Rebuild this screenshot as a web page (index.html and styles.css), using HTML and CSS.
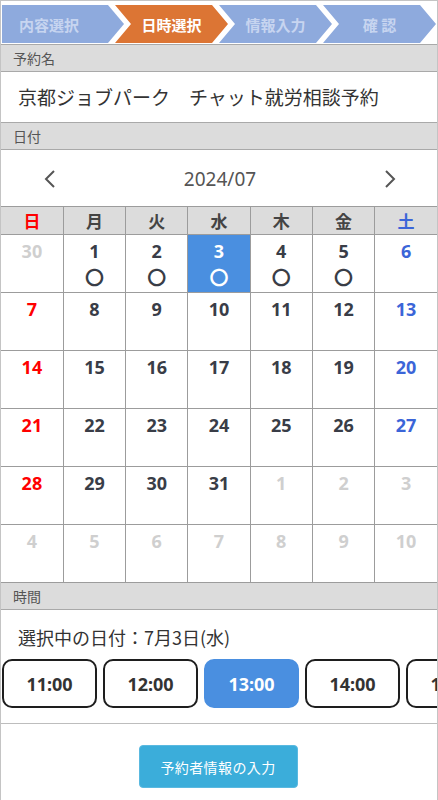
FILE: index.html
```html
<!DOCTYPE html>
<html lang="ja">
<head>
<meta charset="utf-8">
<title>日時選択</title>
<link rel="stylesheet" href="styles.css">
</head>
<body>
<div class="page">
  <div class="steps">
    <div class="step step-first">内容選択</div>
    <div class="step step-active">日時選択</div>
    <div class="step">情報入力</div>
    <div class="step">確 認</div>
  </div>

  <div class="sec-head">予約名</div>
  <div class="name">京都ジョブパーク　チャット就労相談予約</div>

  <div class="sec-head">日付</div>
  <div class="cal-nav">
    <span class="nav-arrow"><svg width="14" height="20" viewBox="0 0 14 20"><polyline points="11,2 3,10 11,18" fill="none" stroke="#555" stroke-width="2"/></svg></span>
    <span class="month">2024/07</span>
    <span class="nav-arrow"><svg width="14" height="20" viewBox="0 0 14 20"><polyline points="3,2 11,10 3,18" fill="none" stroke="#555" stroke-width="2"/></svg></span>
  </div>
  <table class="cal">
    <thead>
      <tr><th class="sun">日</th><th>月</th><th>火</th><th>水</th><th>木</th><th>金</th><th class="sat">土</th></tr>
    </thead>
    <tbody>
      <tr>
        <td class="other"><div class="d">30</div></td>
        <td><div class="d">1</div><div class="ok">〇</div></td>
        <td><div class="d">2</div><div class="ok">〇</div></td>
        <td class="selected"><div class="d">3</div><div class="ok">〇</div></td>
        <td><div class="d">4</div><div class="ok">〇</div></td>
        <td><div class="d">5</div><div class="ok">〇</div></td>
        <td class="sat"><div class="d">6</div></td>
      </tr>
      <tr>
        <td class="sun"><div class="d">7</div></td>
        <td><div class="d">8</div></td><td><div class="d">9</div></td><td><div class="d">10</div></td>
        <td><div class="d">11</div></td><td><div class="d">12</div></td>
        <td class="sat"><div class="d">13</div></td>
      </tr>
      <tr>
        <td class="sun"><div class="d">14</div></td>
        <td><div class="d">15</div></td><td><div class="d">16</div></td><td><div class="d">17</div></td>
        <td><div class="d">18</div></td><td><div class="d">19</div></td>
        <td class="sat"><div class="d">20</div></td>
      </tr>
      <tr>
        <td class="sun"><div class="d">21</div></td>
        <td><div class="d">22</div></td><td><div class="d">23</div></td><td><div class="d">24</div></td>
        <td><div class="d">25</div></td><td><div class="d">26</div></td>
        <td class="sat"><div class="d">27</div></td>
      </tr>
      <tr>
        <td class="sun"><div class="d">28</div></td>
        <td><div class="d">29</div></td><td><div class="d">30</div></td><td><div class="d">31</div></td>
        <td class="other"><div class="d">1</div></td><td class="other"><div class="d">2</div></td>
        <td class="other"><div class="d">3</div></td>
      </tr>
      <tr>
        <td class="other"><div class="d">4</div></td><td class="other"><div class="d">5</div></td>
        <td class="other"><div class="d">6</div></td><td class="other"><div class="d">7</div></td>
        <td class="other"><div class="d">8</div></td><td class="other"><div class="d">9</div></td>
        <td class="other"><div class="d">10</div></td>
      </tr>
    </tbody>
  </table>

  <div class="sec-head sec-head-after-cal">時間</div>
  <div class="time-sec">
    <div class="sel-date">選択中の日付：7月3日(水)</div>
    <div class="times">
      <button class="time">11:00</button>
      <button class="time">12:00</button>
      <button class="time time-selected">13:00</button>
      <button class="time">14:00</button>
      <button class="time">15:00</button>
    </div>
  </div>
  <div class="actions">
    <button class="next">予約者情報の入力</button>
  </div>
</div>
</body>
</html>
```

FILE: styles.css
```css
* { box-sizing: border-box; }
html, body { margin: 0; padding: 0; background: #fff; }
body {
  font-family: "Noto Sans", "Noto Sans CJK JP", sans-serif;
  color: #333;
}
.page {
  width: 438px;
  border: 1px solid #c4c4c4;
  border-bottom: none;
  min-height: 800px;
}

/* steps */
.steps {
  display: flex;
  padding: 4px 0 1px 1px;
  overflow: hidden;
}
.step {
  flex: 0 0 113px;
  height: 38px;
  margin-left: -9px;
  background: #8eaadd;
  color: #c7d5f0;
  font-family: "Noto Sans CJK JP", sans-serif;
  font-weight: 700;
  font-size: 15px;
  display: flex;
  align-items: center;
  justify-content: center;
  clip-path: polygon(0 0, calc(100% - 16px) 0, 100% 50%, calc(100% - 16px) 100%, 0 100%, 16px 50%);
}
.step-first {
  flex-basis: 122px;
  margin-left: 0;
  padding-right: 28px;
  clip-path: polygon(0 0, calc(100% - 16px) 0, 100% 50%, calc(100% - 16px) 100%, 0 100%);
}
.step-active {
  background: #dc7534;
  color: #fff;
}

/* section headers */
.sec-head {
  height: 28px;
  background: #dcdcdc;
  border-top: 1px solid #a9a9a9;
  border-bottom: 1px solid #a9a9a9;
  padding-left: 12px;
  font-size: 14px;
  line-height: 26px;
  color: #555;
  font-family: "Noto Sans CJK JP", sans-serif;
}
.sec-head-after-cal { border-top: none; height: 27px; }

.name {
  height: 50px;
  padding-left: 17px;
  font-size: 19px;
  line-height: 50px;
  color: #333;
  font-family: "Noto Sans CJK JP", sans-serif;
}

/* calendar nav */
.cal-nav {
  height: 56px;
  display: flex;
  align-items: center;
  justify-content: space-between;
  padding: 2px 40px 0 42px;
}
.nav-arrow { display: flex; }
.month {
  font-size: 19px;
  color: #555;
}

/* calendar */
.cal {
  width: 100%;
  border-collapse: collapse;
  table-layout: fixed;
}
.cal th, .cal td {
  border: 1px solid #9c9c9c;
  text-align: center;
  padding: 0;
}
.cal tr > :first-child { border-left: none; }
.cal tr > :last-child { border-right: none; }
.cal th {
  height: 28px;
  background: #dcdcdc;
  font-family: "Noto Sans CJK JP", sans-serif;
  font-weight: 700;
  font-size: 17px;
  color: #444;
}
.cal td {
  height: 58px;
  vertical-align: top;
  color: #393d47;
}
.cal .d {
  font-weight: 700;
  font-size: 18px;
  line-height: 22px;
  padding-top: 5px;
}
.cal .ok {
  font-family: "Noto Sans CJK JP", sans-serif;
  font-size: 19px;
  font-weight: 700;
  line-height: 22px;
  margin-top: 4px;
}
.cal .sun { color: #ff0000; }
.cal .sat { color: #3b65d8; }
.cal .other { color: #cfcfcf; }
.cal .selected { background: #4a8fe0; color: #fff; }

/* time */
.time-sec {
  padding: 15px 0 15px 1px;
  border-bottom: 1px solid #bdbdbd;
}
.sel-date {
  padding-left: 16px;
  font-size: 18px;
  line-height: 24px;
  color: #333;
  font-family: "Noto Sans CJK JP", sans-serif;
}
.times {
  margin-top: 10px;
  display: flex;
  gap: 6px;
  overflow: hidden;
}
.time {
  flex: 0 0 95px;
  height: 49px;
  border: 2px solid #1e1e1e;
  border-radius: 10px;
  background: #fff;
  font-family: "Noto Sans", sans-serif;
  font-weight: 700;
  font-size: 18px;
  color: #333;
  padding: 0;
}
.time-selected {
  background: #4a8fe0;
  border-color: #4a8fe0;
  color: #fff;
}

.actions {
  display: flex;
  justify-content: center;
  padding-top: 21px;
  padding-right: 2px;
}
.next {
  width: 159px;
  height: 43px;
  background: #3badda;
  border: 1px solid #5ab9e0;
  border-radius: 4px;
  color: #fff;
  font-family: "Noto Sans CJK JP", sans-serif;
  font-size: 14px;
  letter-spacing: 0.4px;
  padding: 0;
}
```
